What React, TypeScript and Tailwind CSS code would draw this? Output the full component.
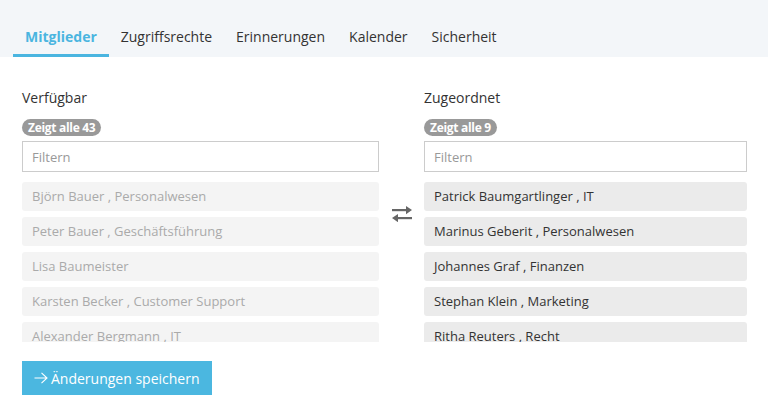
import { useState } from 'react';

const TABS = ['Mitglieder', 'Zugriffsrechte', 'Erinnerungen', 'Kalender', 'Sicherheit'];

const AVAILABLE = [
  'Björn Bauer , Personalwesen',
  'Peter Bauer , Geschäftsführung',
  'Lisa Baumeister',
  'Karsten Becker , Customer Support',
  'Alexander Bergmann , IT',
  'Nina Berger , Finanzen',
];

const ASSIGNED = [
  'Patrick Baumgartlinger , IT',
  'Marinus Geberit , Personalwesen',
  'Johannes Graf , Finanzen',
  'Stephan Klein , Marketing',
  'Ritha Reuters , Recht',
  'Anna Schmid , Vertrieb',
];

/**
 * Members tab of a group editor: two filterable lists (available /
 * assigned) with a swap icon between them and a save button below.
 */
export default function App() {
  const [active, setActive] = useState(0);

  return (
    <div className="min-h-screen bg-white text-[#333] font-['Open_Sans','Liberation_Sans',sans-serif]">
      <div className="h-[57px] bg-[#f3f6f9] flex items-end pl-[13px]">
        {TABS.map((t, i) => (
          <button
            key={t}
            type="button"
            onClick={() => setActive(i)}
            className={`px-3 pb-[7px] text-[14px] leading-5 border-b-[3px] ${
              i === active ? 'border-[#4ab5e0] text-[#4ab5e0] font-bold' : 'border-transparent text-[#333]'
            }`}
          >
            {t}
          </button>
        ))}
      </div>

      <div className="px-[22px] pt-[31px]">
        <div className="flex">
          <MemberColumn title="Verfügbar" count={43} items={AVAILABLE} muted width="w-[357px]" />
          <div className="w-[45px] flex justify-center shrink-0">
            <svg width="22" height="16" viewBox="0 0 22 16" className="mt-[118px]" fill="#666">
              <rect x="1" y="3" width="16" height="2.2" />
              <path d="M15 0 L21 4.1 L15 8.2 Z" />
              <rect x="5" y="11" width="16" height="2.2" />
              <path d="M7 8 L1 12.1 L7 16.2 Z" />
            </svg>
          </div>
          <MemberColumn title="Zugeordnet" count={9} items={ASSIGNED} width="w-[323px]" />
        </div>

        <button
          type="button"
          className="mt-[19px] h-[34px] w-[190px] bg-[#4bb7e0] text-white text-[14px] font-medium flex items-center pl-[12px] gap-[3px] whitespace-nowrap"
        >
          <svg width="14" height="12" viewBox="0 0 14 12" fill="none" stroke="white" strokeWidth="1.1" className="shrink-0">
            <path d="M0.5 6 H13 M7.5 0.8 L13 6 L7.5 11.2" />
          </svg>
          <span>Änderungen speichern</span>
        </button>
      </div>
    </div>
  );
}

function MemberColumn({
  title,
  count,
  items,
  muted,
  width,
}: {
  title: string;
  count: number;
  items: string[];
  muted?: boolean;
  width: string;
}) {
  return (
    <div className={`${width} shrink-0`}>
      <div className="text-[14px] leading-5 text-[#333]">{title}</div>
      <span className="mt-[11px] inline-block h-[17px] rounded-full bg-[#999] px-[6px] text-[12px] leading-[17px] font-bold text-white tracking-[-0.3px] align-top">
        Zeigt alle {count}
      </span>
      <input
        placeholder="Filtern"
        className="mt-[5px] block w-full h-[31px] border border-[#ccc] px-[9px] text-[13px] placeholder:text-[#999] outline-none"
      />
      <div className="mt-[10px] h-[160px] overflow-hidden">
        {items.map((it) => (
          <div
            key={it}
            className={`h-[29px] mb-[6px] rounded-[3px] px-[10px] flex items-center text-[13px] ${
              muted ? 'bg-[#f4f4f4] text-[#aaa]' : 'bg-[#ebebeb] text-[#333]'
            }`}
          >
            {it}
          </div>
        ))}
      </div>
    </div>
  );
}
